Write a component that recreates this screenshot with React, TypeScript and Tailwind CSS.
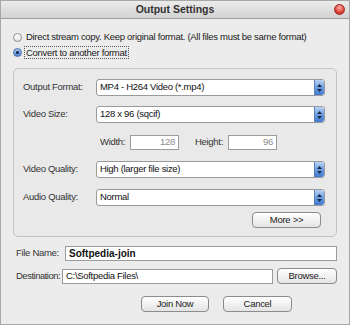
import React from 'react';

const font = { fontFamily: '"Liberation Sans", Arial, sans-serif' };

const Stepper: React.FC = () => (
  <div className="w-[10px] self-stretch rounded-r-[3px] bg-gradient-to-b from-[#b9d3f5] via-[#6d9fe3] to-[#3f78cf] border-l border-[#5a7fb8] flex flex-col items-center justify-center gap-[2px]">
    <svg width="5" height="3" viewBox="0 0 5 3">
      <path d="M2.5 0 L5 3 L0 3 Z" fill="#1b2a44" />
    </svg>
    <svg width="5" height="3" viewBox="0 0 5 3">
      <path d="M0 0 L5 0 L2.5 3 Z" fill="#1b2a44" />
    </svg>
  </div>
);

const Select: React.FC<{ value: string }> = ({ value }) => (
  <div className="flex h-[17px] w-[229px] items-stretch rounded-[3px] border border-[#9a9a9a] bg-white">
    <div className="flex-1 pl-[3px] flex items-center text-[#111]">{value}</div>
    <Stepper />
  </div>
);

const Button: React.FC<{ label: string; className?: string }> = ({ label, className }) => (
  <div
    className={`flex items-center justify-center rounded-[4px] border border-[#8c8c8c] bg-gradient-to-b from-[#ffffff] to-[#e4e4e4] text-[#222] ${className ?? ''}`}
  >
    {label}
  </div>
);

const Radio: React.FC<{ checked?: boolean }> = ({ checked }) =>
  checked ? (
    <div className="w-[9px] h-[9px] rounded-full border border-[#4a6ea8] bg-gradient-to-b from-[#a9c9f1] to-[#4f86d6] flex items-center justify-center">
      <div className="w-[3px] h-[3px] rounded-full bg-[#10213d]" />
    </div>
  ) : (
    <div className="w-[9px] h-[9px] rounded-full border border-[#8e8e8e] bg-gradient-to-b from-white to-[#e6e6e6]" />
  );

const FormRow: React.FC<{ label: string; value: string; className?: string }> = ({ label, value, className }) => (
  <div className={`flex items-center ${className ?? ''}`}>
    <div className="w-[73px] text-[#333]">{label}</div>
    <Select value={value} />
  </div>
);

const App: React.FC = () => {
  return (
    <div
      className="w-[350px] h-[325px] bg-[#ececec] border border-[#a8a8a8] flex flex-col overflow-hidden text-[9.5px] tracking-[-0.3px] whitespace-nowrap"
      style={font}
    >
      <div className="relative h-[18px] shrink-0 bg-gradient-to-b from-[#ececec] to-[#d2d2d2] border-b border-[#9f9f9f] flex items-center justify-center">
        <span className="text-[10.5px] font-bold text-[#333] tracking-normal">Output Settings</span>
        <div className="absolute right-[4px] top-[3px] w-[11px] h-[11px] rounded-full border border-[#9b2a25] bg-[radial-gradient(circle_at_50%_30%,#ffb3a8,#e2493c_55%,#a8221a)]" />
      </div>

      <div className="flex flex-col pt-[11px] px-[12px]">
        <div className="flex items-center h-[15px]">
          <Radio />
          <span className="ml-[4px] text-[#222]">Direct stream copy. Keep original format. (All files must be same format)</span>
        </div>
        <div className="flex items-center h-[15px]">
          <Radio checked />
          <span className="ml-[2px] px-[1px] border border-dotted border-[#555] text-[#222] leading-[11px]">Convert to another format</span>
        </div>

        <div className="mt-[8px] h-[169px] rounded-[5px] border border-[#c4c4c4] bg-[#e9e9e9] pl-[9px] pr-[11px] pt-[10px] flex flex-col">
          <FormRow label="Output Format:" value="MP4 - H264 Video (*.mp4)" />
          <FormRow label="Video Size:" value="128 x 96 (sqcif)" className="mt-[10px]" />
          <div className="mt-[12px] flex items-center h-[15px] text-[#333]">
            <div className="w-[77px]" />
            <span className="w-[30px]">Width:</span>
            <div className="w-[49px] h-[15px] border border-[#9c9c9c] bg-white pr-[3px] text-[#8a8a8a] flex items-center justify-end">128</div>
            <span className="ml-[16px] w-[33px]">Height:</span>
            <div className="w-[49px] h-[15px] border border-[#9c9c9c] bg-white pr-[3px] text-[#8a8a8a] flex items-center justify-end">96</div>
          </div>
          <FormRow label="Video Quality:" value="High (larger file size)" className="mt-[11px]" />
          <FormRow label="Audio Quality:" value="Normal" className="mt-[11px]" />
          <div className="mt-[6px] flex justify-end pr-[4px]">
            <Button label="More >>" className="w-[69px] h-[16px]" />
          </div>
        </div>

        <div className="mt-[9px] flex items-center h-[15px] pl-[3px]">
          <span className="w-[49px] text-[#333]">File Name:</span>
          <div className="flex-1 h-[15px] border border-[#9c9c9c] bg-white flex items-center pl-[3px] text-[10px] font-bold text-[#111] tracking-normal">Softpedia-join</div>
        </div>
        <div className="mt-[7px] flex items-center h-[16px] pl-[3px]">
          <span className="w-[46px] text-[#333] tracking-[-0.5px]">Destination:</span>
          <div className="w-[211px] h-[15px] border border-[#9c9c9c] bg-white flex items-center pl-[3px] text-[#111]">C:\Softpedia Files\</div>
          <Button label="Browse..." className="ml-auto w-[60px] h-[16px]" />
        </div>
        <div className="mt-[12px] flex items-center pl-[128px] gap-[14px]">
          <Button label="Join Now" className="w-[68px] h-[16px]" />
          <Button label="Cancel" className="w-[69px] h-[16px]" />
        </div>
      </div>
    </div>
  );
};

export default App;
